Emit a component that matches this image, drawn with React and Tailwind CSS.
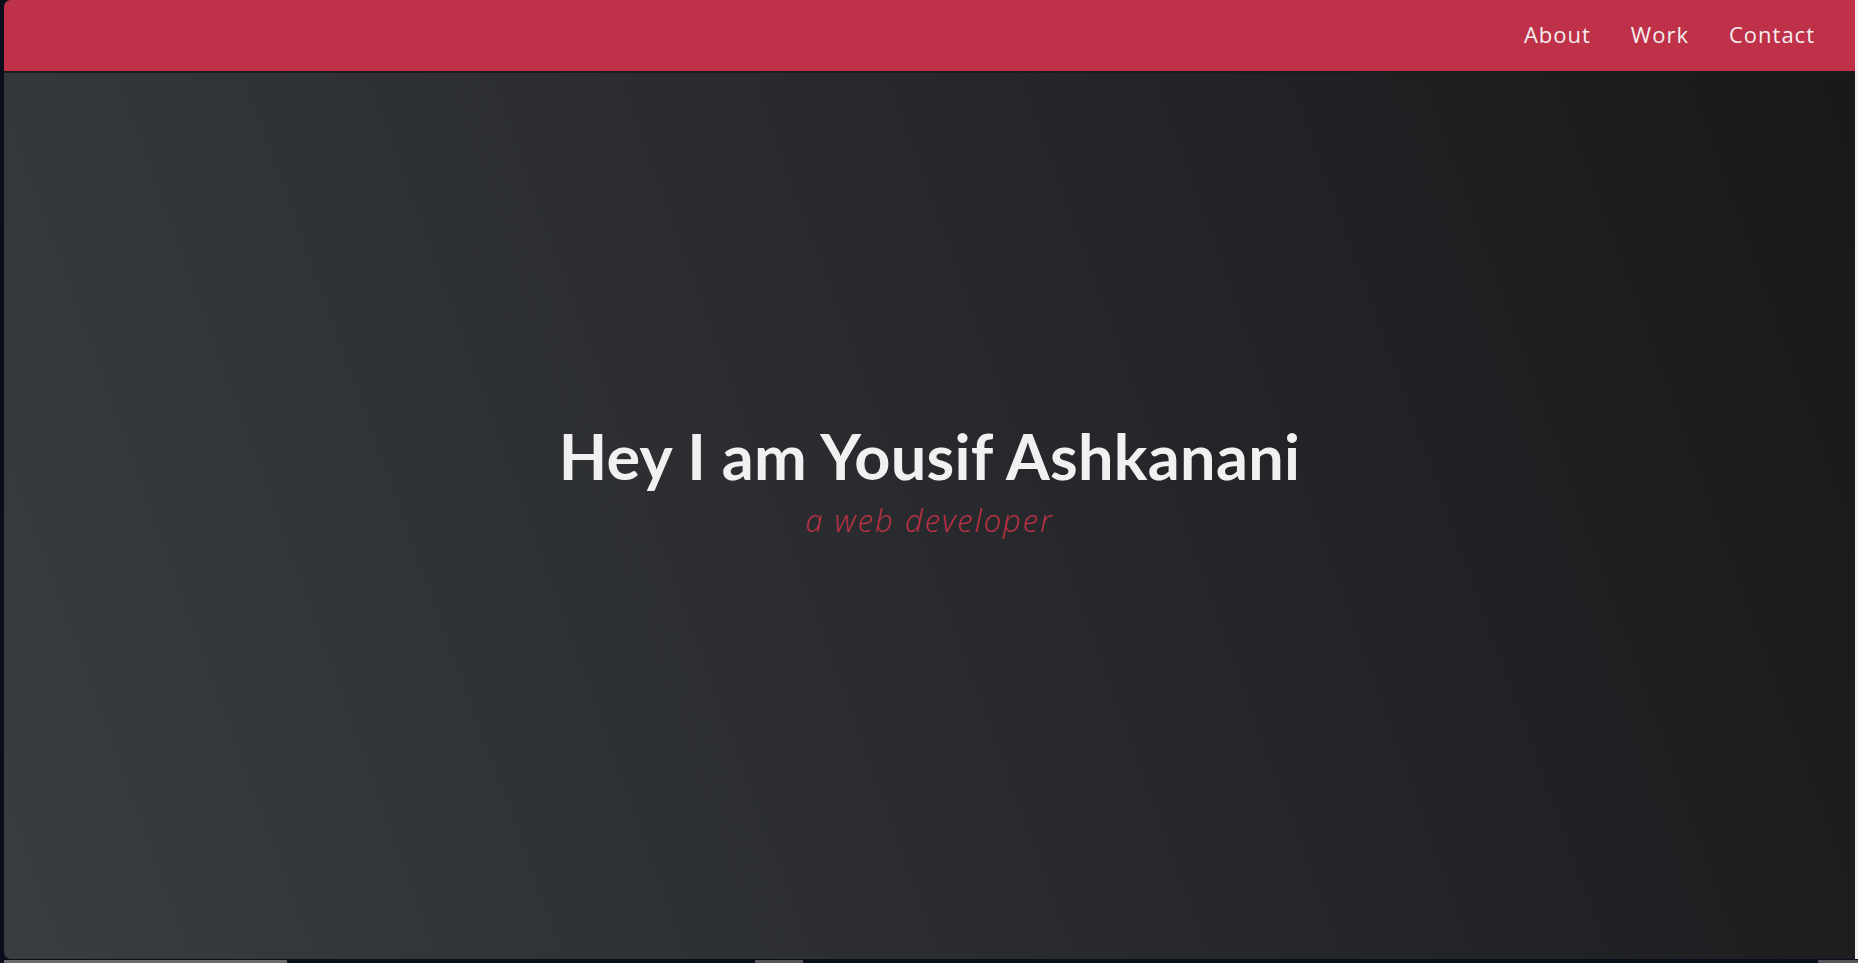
export default function App() {
  return (
    <div className="w-[1858px] h-[963px] bg-[#0a0e1c] flex flex-col overflow-hidden">
      <div className="flex flex-1 min-h-0">
        <div className="w-[4px] shrink-0" />
        <div className="relative flex-1 rounded-l-[7px] overflow-hidden bg-[linear-gradient(70deg,#3a3d40_0%,#2b2d30_40%,#18181a_100%)]">
          <header className="absolute top-0 left-0 right-0 h-[73px] bg-[#bf3148] border-b-2 border-[#1c1c1e] flex items-center justify-end pr-[40px]">
            <nav className="flex items-center gap-[40px] pb-[3px]">
              {["About", "Work", "Contact"].map((t) => (
                <a
                  key={t}
                  className="text-[22px] leading-none text-[#f3eef0] font-['Open_Sans',sans-serif] tracking-[1px]"
                >
                  {t}
                </a>
              ))}
            </nav>
          </header>
          <div className="h-full flex flex-col items-center justify-center">
            <h1 className="text-[63px] font-bold leading-[72px] text-[#f1f1f2] font-['Lato',sans-serif] tracking-[0.3px]">
              Hey I am Yousif Ashkanani
            </h1>
            <p className="text-[31px] font-light italic leading-[40px] text-[#bf3148] font-['Open_Sans',sans-serif] tracking-[2px] mt-[8px]">
              a web developer
            </p>
          </div>
        </div>
        <div className="w-[3px] shrink-0 bg-[#f2f2f2]" />
      </div>
      <div className="h-[4px] shrink-0 relative">
        <div className="absolute left-[4px] w-[283px] top-[1px] h-[3px] bg-[#6b6d70]" />
        <div className="absolute left-[755px] w-[48px] top-[1px] h-[3px] bg-[#55575a]" />
        <div className="absolute left-[1818px] w-[40px] top-[1px] h-[3px] bg-[#55575a]" />
      </div>
    </div>
  );
}
